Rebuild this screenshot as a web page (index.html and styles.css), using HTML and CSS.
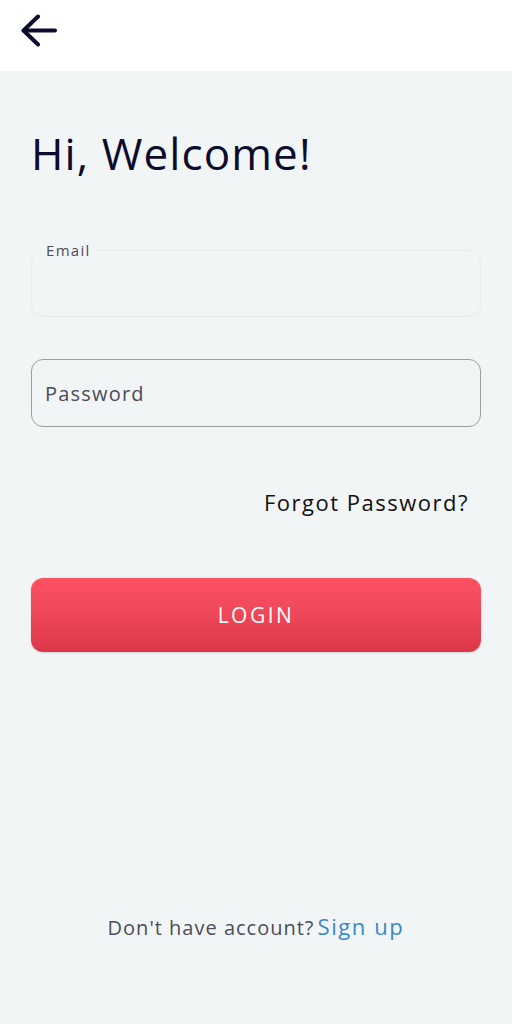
FILE: index.html
```html
<!DOCTYPE html>
<html lang="en">
<head>
<meta charset="utf-8">
<link rel="stylesheet" href="styles.css">
<title>Login</title>
</head>
<body>
<header class="topbar">
  <button class="back" aria-label="Back">
    <svg width="38" height="36" viewBox="0 0 38 36" fill="none" stroke="#0c0c2e" stroke-width="4" stroke-linecap="round" stroke-linejoin="round">
      <path d="M35 16.5H4"/>
      <path d="M18 2.5L3.5 16.5L18 30.5"/>
    </svg>
  </button>
</header>
<main class="content">
  <h1 class="title">Hi, Welcome!</h1>
  <fieldset class="field field-email">
    <legend class="legend">Email</legend>
  </fieldset>
  <div class="field field-password">
    <span class="placeholder">Password</span>
  </div>
  <div class="forgot-row"><a class="forgot">Forgot Password?</a></div>
  <button class="login">LOGIN</button>
  <div class="spacer"></div>
  <p class="signup">Don't have account?<a class="signup-link">Sign up</a></p>
</main>
</body>
</html>
```

FILE: styles.css
```css
* { box-sizing: border-box; }
html, body { margin: 0; padding: 0; }
body {
  width: 512px;
  height: 1024px;
  background: #f2f5f5;
  font-family: "Open Sans", "DejaVu Sans", sans-serif;
  display: flex;
  flex-direction: column;
}
.topbar {
  height: 71px;
  background: #ffffff;
  display: flex;
  align-items: center;
  padding-left: 20px;
}
.back {
  border: 0;
  background: none;
  padding: 0;
  margin-top: -8px;
  display: flex;
}
.content {
  flex: 1;
  display: flex;
  flex-direction: column;
  padding: 0 31px;
}
.title {
  margin: 55px 0 0 0;
  font-size: 44px;
  font-weight: 500;
  color: #0c0c2e;
  line-height: 54px;
  letter-spacing: 1.1px;
}
.field {
  height: 67px;
  border-radius: 12px;
  margin: 0;
}
.field-email {
  margin-top: 62px;
  border: 1px solid #e8ecec;
  padding: 0 10px;
  height: 75px;
}
.legend {
  font-size: 15px;
  color: #4d4d5a;
  padding: 0 4px;
  line-height: 16px;
  letter-spacing: 1.3px;
}
.field-password {
  margin-top: 42px;
  border: 1.5px solid #9a9c9e;
  display: flex;
  align-items: center;
  padding-left: 13px;
  height: 68px;
}
.placeholder {
  font-size: 20px;
  color: #4a4a58;
  letter-spacing: 1.2px;
}
.forgot-row {
  display: flex;
  justify-content: flex-end;
  margin-top: 59px;
  padding-right: 12px;
}
.forgot {
  font-size: 22px;
  color: #111111;
  line-height: 32px;
  letter-spacing: 1.5px;
}
.login {
  margin-top: 60px;
  height: 74px;
  border: 0;
  border-radius: 12px;
  background: linear-gradient(180deg, #fd5161 0%, #f04a5c 40%, #dc3649 100%);
  color: #ffffff;
  font-family: inherit;
  font-size: 21px;
  letter-spacing: 2.5px;
  box-shadow: 0 1px 2px rgba(0,0,0,0.15);
}
.spacer { flex: 1; }
.signup {
  margin: 0 0 83px;
  text-align: center;
  font-size: 20px;
  color: #4a4d5a;
  letter-spacing: 1px;
}
.signup-link {
  color: #3a87cc;
  font-size: 22px;
  margin-left: 3px;
  letter-spacing: 1.6px;
}
```
